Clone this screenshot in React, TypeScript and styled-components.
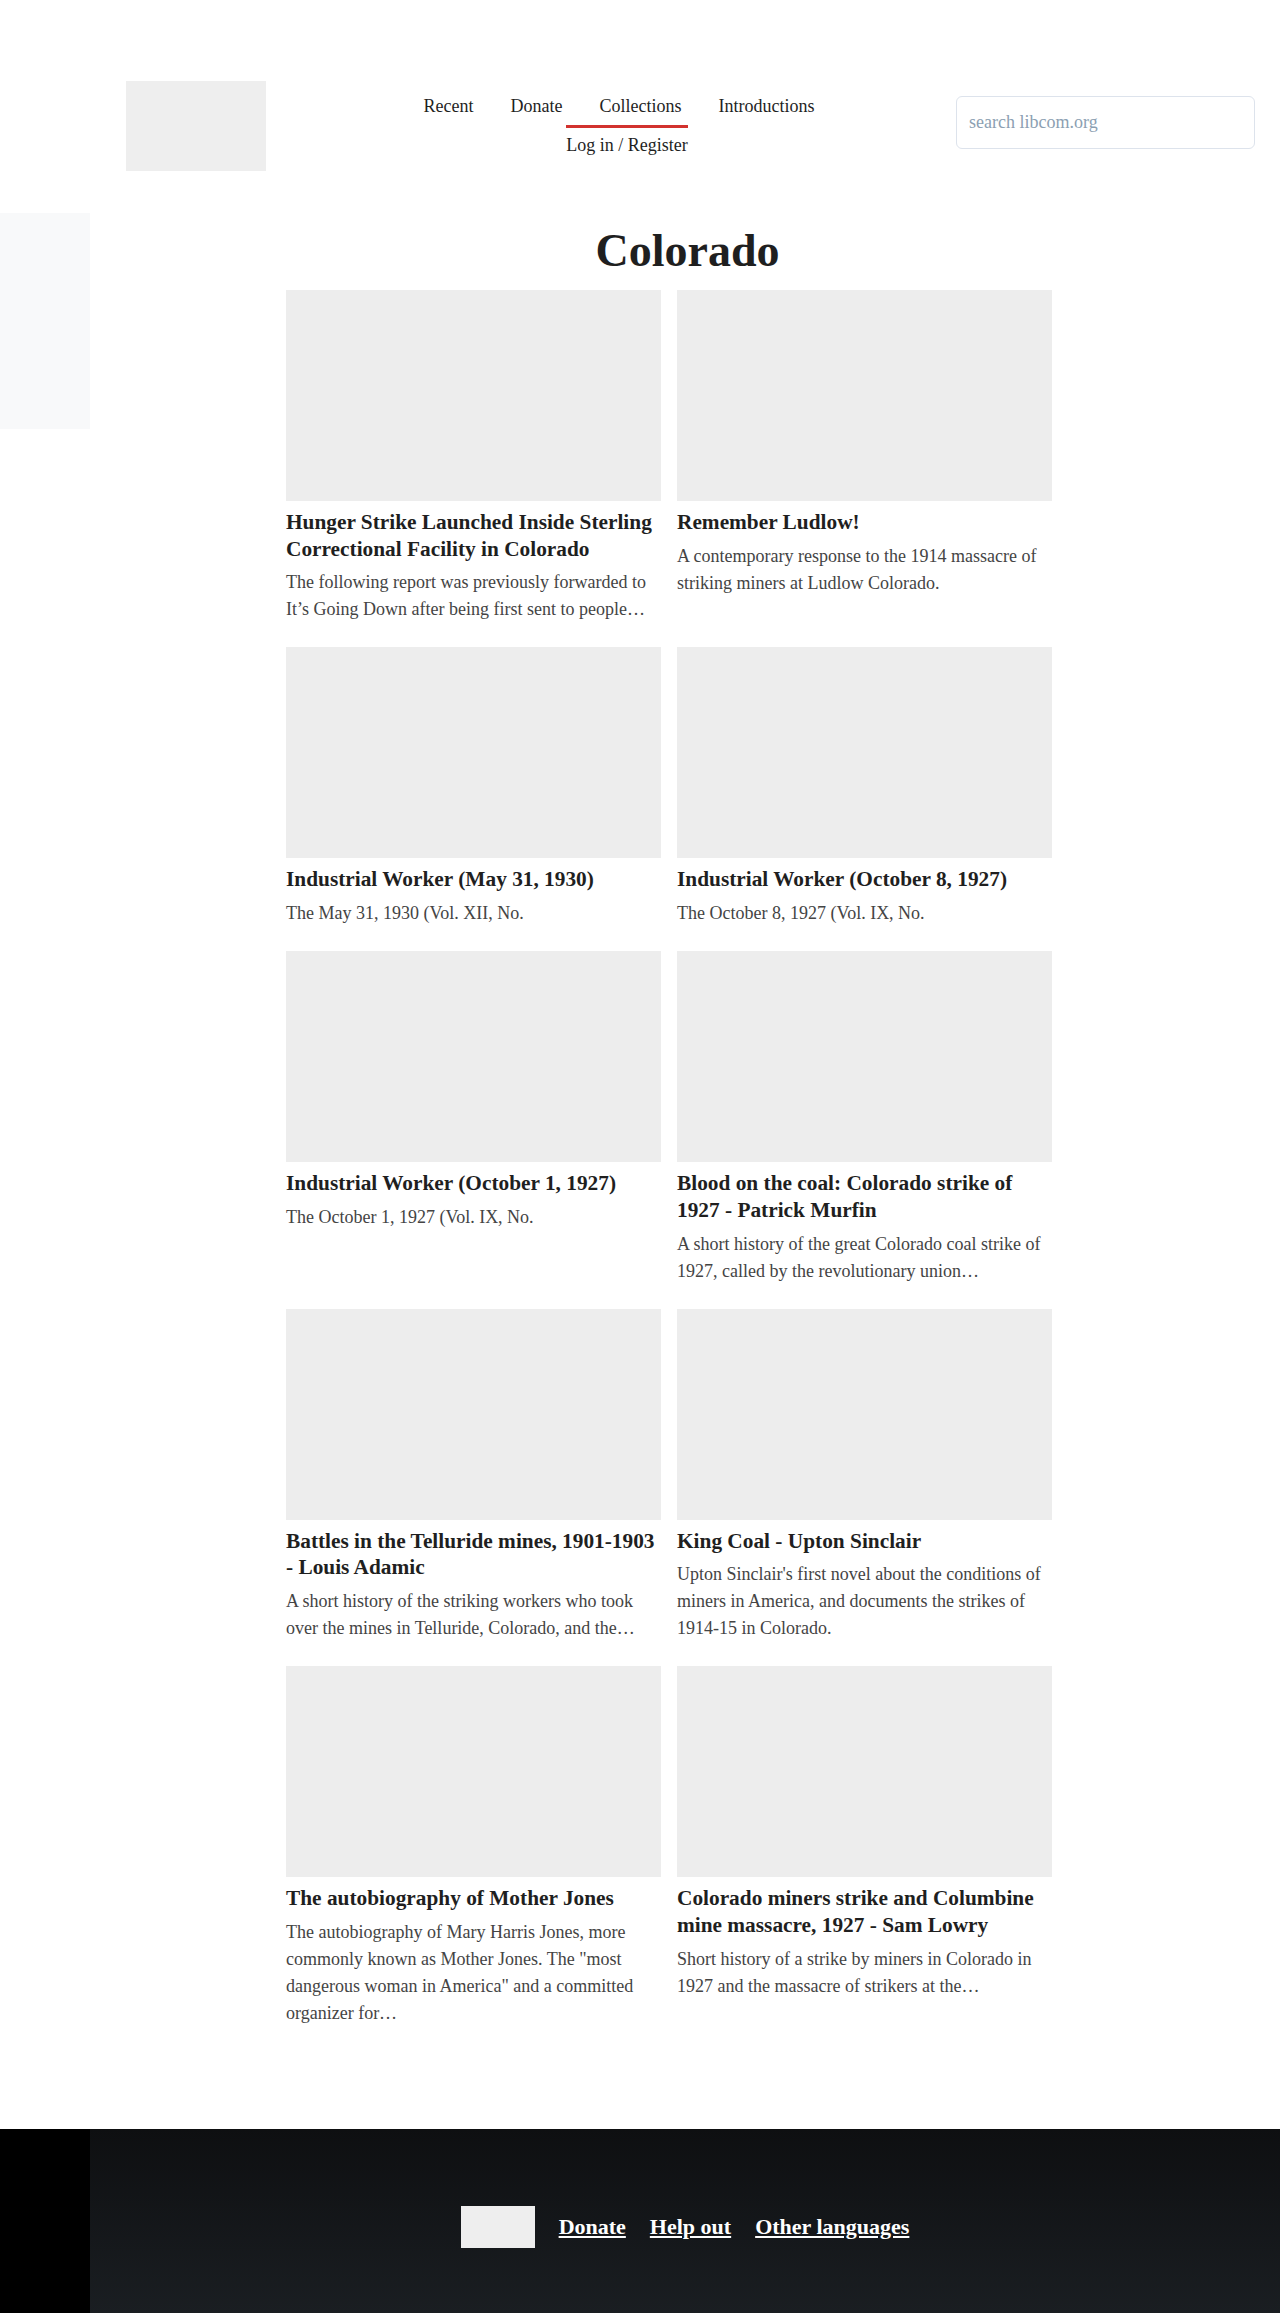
import React from 'react';
import styled, { createGlobalStyle, css } from 'styled-components';

const GlobalStyle = createGlobalStyle`
  html, body { margin: 0; padding: 0; background: #ffffff; }
  body { font-family: "Liberation Serif", "Times New Roman", serif; color: #1f1f1f; }
  *, *::before, *::after { box-sizing: border-box; }
`;

const Header = styled.header`
  display: flex;
  align-items: flex-start;
  padding: 81px 25px 42px 126px;
`;

const Logo = styled.div`
  width: 140px;
  height: 90px;
  flex-shrink: 0;
  background: #eeeeee;
`;

const Nav = styled.nav`
  flex: 1;
  display: flex;
  flex-direction: column;
  align-items: center;
  padding-top: 12px;
`;

const NavRow = styled.ul<{ $shift: number; $top?: number }>`
  list-style: none;
  margin: ${(p) => p.$top ?? 0}px 0 0;
  padding: 0 0 0 ${(p) => p.$shift}px;
  display: flex;
  gap: 37px;
`;

const NavLink = styled.a<{ $active?: boolean }>`
  display: block;
  font-size: 18px;
  line-height: 27px;
  color: #1f1f1f;
  text-decoration: none;
  ${(p) =>
    p.$active &&
    css`
      border-top: 3px solid #d2322e;
      padding-top: 4px;
    `}
`;

const Search = styled.input`
  width: 299px;
  height: 53px;
  margin-top: 15px;
  flex-shrink: 0;
  border: 1px solid #dde3ec;
  border-radius: 6px;
  padding: 0 12px;
  font-family: "Liberation Serif", "Times New Roman", serif;
  font-size: 18px;
  color: #1f1f1f;
  background: #fff;
  outline: none;
  &::placeholder {
    color: #8c9fb2;
  }
`;

const Body = styled.div`
  display: flex;
  align-items: flex-start;
`;

const Sidebar = styled.aside`
  width: 90px;
  flex-shrink: 0;
`;

const SideBox = styled.div`
  height: 216px;
  background: #f8f9fa;
`;

const Main = styled.main`
  flex: 1;
  padding: 11px 0 102px;
`;

const Title = styled.h1`
  margin: 0 0 13px;
  padding-left: 5px;
  text-align: center;
  font-size: 46px;
  line-height: 53px;
  font-weight: 700;
  color: #1f1f1f;
`;

const Grid = styled.div`
  width: 798px;
  margin: 0 auto;
  display: grid;
  grid-template-columns: repeat(2, 375px);
  column-gap: 16px;
  row-gap: 24px;
`;

const Card = styled.article`
  display: flex;
  flex-direction: column;
`;

const Thumb = styled.div`
  height: 211px;
  background: #ededed;
`;

const CardTitle = styled.h2`
  margin: 8px 0 0;
  font-size: 21.33px;
  line-height: 26.7px;
  font-weight: 700;
  color: #1f1f1f;
`;

const CardDesc = styled.p`
  margin: 7px 0 0;
  font-size: 18px;
  line-height: 27px;
  color: #444444;
`;

const Footer = styled.footer`
  display: flex;
  height: 185px;
`;

const FooterSide = styled.div`
  width: 90px;
  flex-shrink: 0;
  background: #000000;
`;

const FooterMain = styled.div`
  flex: 1;
  display: flex;
  align-items: center;
  justify-content: center;
  gap: 24px;
  padding-top: 11px;
  background: linear-gradient(180deg, #0e0f11 0%, #1a1e22 100%);
`;

const FooterLogo = styled.div`
  width: 74px;
  height: 42px;
  background: #eeeeee;
`;

const FooterLink = styled.a`
  font-size: 22px;
  font-weight: 700;
  color: #ffffff;
  text-decoration: underline;
`;

const items = [
  {
    title: 'Hunger Strike Launched Inside Sterling Correctional Facility in Colorado',
    desc: 'The following report was previously forwarded to It’s Going Down after being first sent to people…',
  },
  {
    title: 'Remember Ludlow!',
    desc: 'A contemporary response to the 1914 massacre of striking miners at Ludlow Colorado.',
  },
  { title: 'Industrial Worker (May 31, 1930)', desc: 'The May 31, 1930 (Vol. XII, No.' },
  { title: 'Industrial Worker (October 8, 1927)', desc: 'The October 8, 1927 (Vol. IX, No.' },
  { title: 'Industrial Worker (October 1, 1927)', desc: 'The October 1, 1927 (Vol. IX, No.' },
  {
    title: 'Blood on the coal: Colorado strike of 1927 - Patrick Murfin',
    desc: 'A short history of the great Colorado coal strike of 1927, called by the revolutionary union…',
  },
  {
    title: 'Battles in the Telluride mines, 1901-1903 - Louis Adamic',
    desc: 'A short history of the striking workers who took over the mines in Telluride, Colorado, and the…',
  },
  {
    title: 'King Coal - Upton Sinclair',
    desc: "Upton Sinclair's first novel about the conditions of miners in America, and documents the strikes of 1914-15 in Colorado.",
  },
  {
    title: 'The autobiography of Mother Jones',
    desc: 'The autobiography of Mary Harris Jones, more commonly known as Mother Jones. The "most dangerous woman in America" and a committed organizer for…',
  },
  {
    title: 'Colorado miners strike and Columbine mine massacre, 1927 - Sam Lowry',
    desc: 'Short history of a strike by miners in Colorado in 1927 and the massacre of strikers at the…',
  },
];

export default function App() {
  return (
    <>
      <GlobalStyle />
      <Header>
        <Logo />
        <Nav>
          <NavRow $shift={16}>
            <li><NavLink href="#">Recent</NavLink></li>
            <li><NavLink href="#">Donate</NavLink></li>
            <li><NavLink href="#">Collections</NavLink></li>
            <li><NavLink href="#">Introductions</NavLink></li>
          </NavRow>
          <NavRow $shift={32} $top={5}>
            <li><NavLink href="#" $active>Log in / Register</NavLink></li>
          </NavRow>
        </Nav>
        <Search placeholder="search libcom.org" />
      </Header>
      <Body>
        <Sidebar>
          <SideBox />
        </Sidebar>
        <Main>
          <Title>Colorado</Title>
          <Grid>
            {items.map((it) => (
              <Card key={it.title}>
                <Thumb />
                <CardTitle>{it.title}</CardTitle>
                <CardDesc>{it.desc}</CardDesc>
              </Card>
            ))}
          </Grid>
        </Main>
      </Body>
      <Footer>
        <FooterSide />
        <FooterMain>
          <FooterLogo />
          <FooterLink href="#">Donate</FooterLink>
          <FooterLink href="#">Help out</FooterLink>
          <FooterLink href="#">Other languages</FooterLink>
        </FooterMain>
      </Footer>
    </>
  );
}
